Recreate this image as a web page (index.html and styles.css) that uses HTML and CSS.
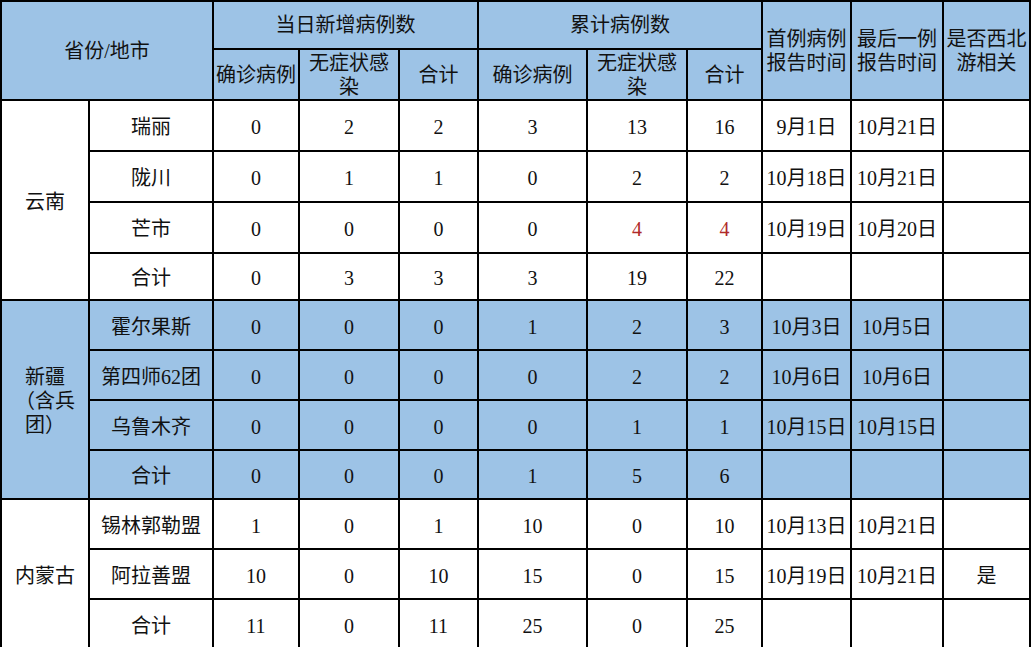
FILE: index.html
```html
<!DOCTYPE html>
<html lang="zh-CN">
<head>
<meta charset="utf-8">
<title>病例统计</title>
<link rel="stylesheet" href="styles.css">
</head>
<body>
<table class="stats">
  <colgroup>
    <col class="c-prov"><col class="c-city">
    <col class="c-n1"><col class="c-n2"><col class="c-n3">
    <col class="c-t1"><col class="c-t2"><col class="c-t3">
    <col class="c-first"><col class="c-last"><col class="c-nw">
  </colgroup>
  <thead>
    <tr class="hd1">
      <th colspan="2" rowspan="2">省份/地市</th>
      <th colspan="3">当日新增病例数</th>
      <th colspan="3">累计病例数</th>
      <th rowspan="2">首例病例报告时间</th>
      <th rowspan="2">最后一例报告时间</th>
      <th rowspan="2">是否西北游相关</th>
    </tr>
    <tr class="hd2">
      <th>确诊病例</th><th class="wrap">无症状感染</th><th>合计</th>
      <th>确诊病例</th><th class="wrap">无症状感染</th><th>合计</th>
    </tr>
  </thead>
  <tbody class="yn">
    <tr><td rowspan="4">云南</td><td>瑞丽</td><td>0</td><td>2</td><td>2</td><td>3</td><td>13</td><td>16</td><td>9月1日</td><td>10月21日</td><td></td></tr>
    <tr><td>陇川</td><td>0</td><td>1</td><td>1</td><td>0</td><td>2</td><td>2</td><td>10月18日</td><td>10月21日</td><td></td></tr>
    <tr><td>芒市</td><td>0</td><td>0</td><td>0</td><td>0</td><td class="red">4</td><td class="red">4</td><td>10月19日</td><td>10月20日</td><td></td></tr>
    <tr class="total"><td>合计</td><td>0</td><td>3</td><td>3</td><td>3</td><td>19</td><td>22</td><td></td><td></td><td></td></tr>
  </tbody>
  <tbody class="xj">
    <tr><td rowspan="4">新疆<br>（含兵<br>团）</td><td>霍尔果斯</td><td>0</td><td>0</td><td>0</td><td>1</td><td>2</td><td>3</td><td>10月3日</td><td>10月5日</td><td></td></tr>
    <tr><td>第四师62团</td><td>0</td><td>0</td><td>0</td><td>0</td><td>2</td><td>2</td><td>10月6日</td><td>10月6日</td><td></td></tr>
    <tr><td>乌鲁木齐</td><td>0</td><td>0</td><td>0</td><td>0</td><td>1</td><td>1</td><td>10月15日</td><td>10月15日</td><td></td></tr>
    <tr class="total"><td>合计</td><td>0</td><td>0</td><td>0</td><td>1</td><td>5</td><td>6</td><td></td><td></td><td></td></tr>
  </tbody>
  <tbody class="nm">
    <tr><td rowspan="3">内蒙古</td><td>锡林郭勒盟</td><td>1</td><td>0</td><td>1</td><td>10</td><td>0</td><td>10</td><td>10月13日</td><td>10月21日</td><td></td></tr>
    <tr><td>阿拉善盟</td><td>10</td><td>0</td><td>10</td><td>15</td><td>0</td><td>15</td><td>10月19日</td><td>10月21日</td><td>是</td></tr>
    <tr class="total"><td>合计</td><td>11</td><td>0</td><td>11</td><td>25</td><td>0</td><td>25</td><td></td><td></td><td></td></tr>
  </tbody>
</table>
</body>
</html>
```

FILE: styles.css
```css
html, body {
  margin: 0;
  padding: 0;
  background: #ffffff;
}

.stats {
  border-collapse: collapse;
  table-layout: fixed;
  width: 1031px;
  font-family: "Liberation Serif", "Noto Sans CJK SC", serif;
  font-size: 20px;
  color: #111;
}

.c-prov { width: 88px; }
.c-city { width: 124px; }
.c-n1 { width: 86px; }
.c-n2 { width: 100px; }
.c-n3 { width: 79px; }
.c-t1 { width: 109px; }
.c-t2 { width: 100px; }
.c-t3 { width: 75px; }
.c-first { width: 89px; }
.c-last { width: 92px; }
.c-nw { width: 87px; }

.stats th,
.stats td {
  border: 2px solid #000;
  padding: 0 1px;
  text-align: center;
  vertical-align: middle;
  font-weight: normal;
  line-height: 24px;
  overflow: hidden;
}

.stats td {
  padding-top: 3px;
}

.stats thead th {
  background: #9dc3e6;
}

.stats thead th.wrap {
  padding: 0 4px;
}

.hd1 { height: 48px; }
.hd2 { height: 51px; }

.yn tr { height: 51px; }
.yn tr.total { height: 47px; }

.xj tr { height: 50px; }
.xj tr.total { height: 49px; }
.xj td { background: #9dc3e6; }

.nm tr { height: 50px; }

.red { color: #b02a2a; }
```
